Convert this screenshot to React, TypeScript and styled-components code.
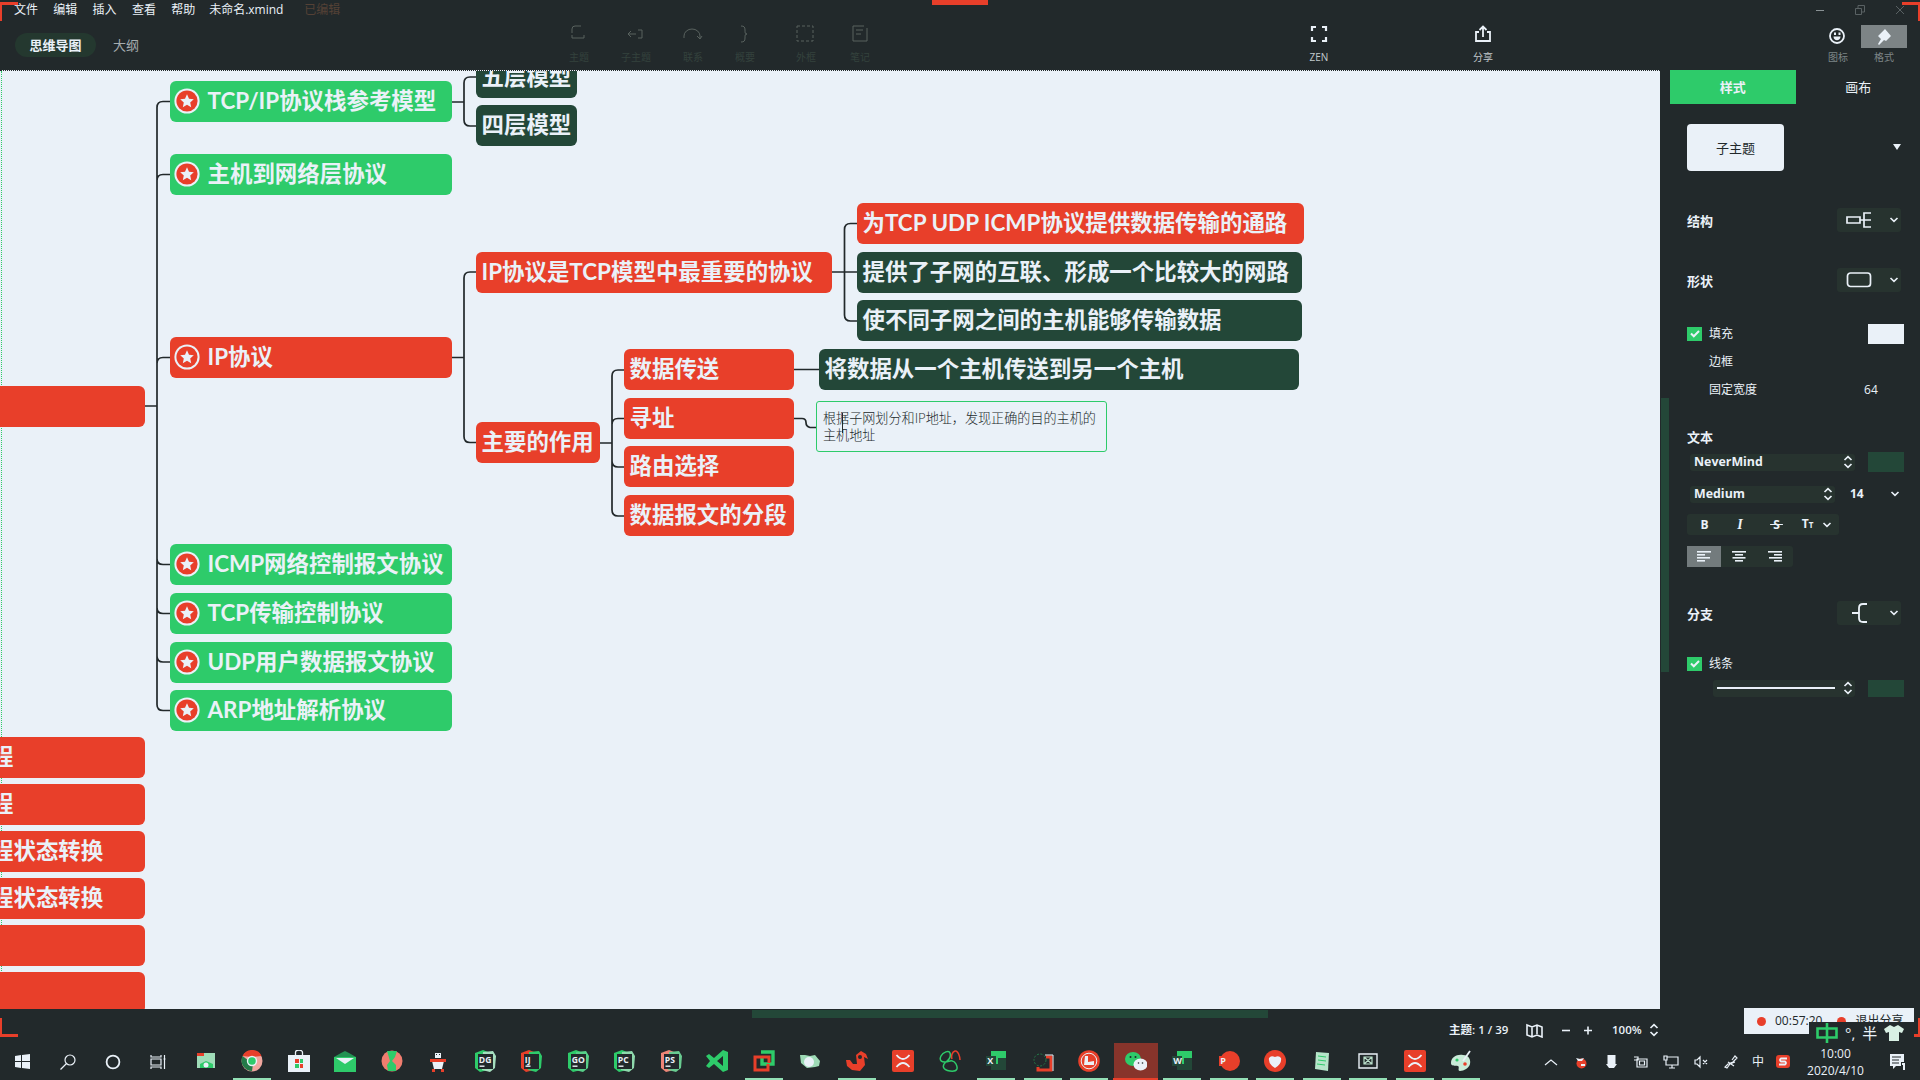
import React from "react";
import styled, { createGlobalStyle } from "styled-components";

const dark = "#22292b";
const light = "#eaf1f8";
const green = "#2ecb6a";
const red = "#e83f2a";
const forest = "#234738";
const faint = "#27332f";
const dim = "#46504f";

const GlobalStyle = createGlobalStyle`
  * { box-sizing: border-box; }
  body { margin: 0; background: ${dark}; overflow: hidden; }
  svg { display: block; flex: none; }
`;

const Screen = styled.div`
  position: relative;
  width: 1920px;
  height: 1080px;
  display: grid;
  grid-template-rows: 70px 939px 34px 37px;
  overflow: hidden;
  background: ${dark};
  color: ${light};
  font: 12px/16px "Open Sans", "Noto Sans CJK SC", sans-serif;
  white-space: nowrap;
`;

/* ---------- header ---------- */
const Header = styled.header`
  display: grid;
  grid-template-rows: 20px 50px;
`;
const MenuBar = styled.div`
  display: flex;
  align-items: center;
  padding-left: 14px;
`;
const MenuItem = styled.span<{ $w?: number }>`
  width: ${(p) => p.$w ?? 39.3}px;
  font-size: 12px;
`;
const Edited = styled.span`
  color: #554136;
`;
const WindowButtons = styled.div`
  display: flex;
  gap: 28px;
  margin-left: auto;
  padding-right: 14px;
  color: #899194;
`;
const Toolbar = styled.div`
  display: flex;
  align-items: flex-start;
`;
const ViewTab = styled.button<{ $active?: boolean }>`
  margin: 13px 0 0 ${(p) => (p.$active ? 15 : 0)}px;
  width: ${(p) => (p.$active ? 81 : 60)}px;
  height: 24px;
  padding: 0;
  border: 0;
  border-radius: 12px;
  background: ${(p) => (p.$active ? "#24382f" : "transparent")};
  color: ${(p) => (p.$active ? light : "#a5acaf")};
  font: ${(p) => (p.$active ? 700 : 400)} 13px/22px "Noto Sans CJK SC", sans-serif;
`;
const Tool = styled.button<{ $w: number; $left?: number; $dim?: boolean; $soft?: boolean }>`
  display: flex;
  flex-direction: column;
  align-items: center;
  justify-content: space-between;
  width: ${(p) => p.$w}px;
  height: 46px;
  margin-left: ${(p) => p.$left ?? 0}px;
  padding: 5px 0 2px;
  border: 0;
  background: none;
  color: ${(p) => (p.$dim ? "#59625f" : light)};
  font: 10px/14px "Open Sans", "Noto Sans CJK SC", sans-serif;
  span { color: ${(p) => (p.$dim ? "#34423d" : p.$soft ? "#7d8587" : "#c3cacd")}; }
`;
const PinBox = styled.div`
  display: grid;
  place-items: center;
  width: 46px;
  height: 23px;
  background: #7d8486;
`;

/* ---------- canvas ---------- */
const Body = styled.div`
  display: grid;
  grid-template-columns: 1660px 10px 250px;
`;
const Canvas = styled.main`
  position: relative;
  overflow: hidden;
  background: ${light};
  border-top: 1px dotted ${dark};
`;
const CanvasEdge = styled.div`
  position: absolute;
  left: 1px;
  top: 0;
  bottom: 0;
  border-left: 1px dotted ${green};
`;
const Links = styled.svg`
  position: absolute;
  left: 0;
  top: -71px;
`;
const Topic = styled.div<{ $x: number; $y: number; $w: number; $c: string; $pad: number }>`
  position: absolute;
  left: ${(p) => p.$x}px;
  top: ${(p) => p.$y - 71}px;
  width: ${(p) => p.$w}px;
  height: 41px;
  display: flex;
  align-items: center;
  gap: 8px;
  padding: 0 0 1px ${(p) => p.$pad}px;
  border-radius: 6px;
  background: ${(p) => p.$c};
  color: ${light};
  font: 700 22.45px/30px Lato, "Noto Sans CJK SC", sans-serif;
`;
const Leaf = styled.div`
  position: absolute;
  left: 816px;
  top: 330px;
  width: 291px;
  height: 51px;
  padding: 8px 6px;
  border: 1px solid ${green};
  border-radius: 3px;
  color: ${dark};
  font: 300 13.1px/17px Lato, "Noto Sans CJK SC", sans-serif;
`;
const TextCursor = styled.i`
  position: absolute;
  left: 842px;
  top: 342px;
  width: 1px;
  height: 20px;
  background: ${dark};
`;

/* ---------- format panel ---------- */
const Gutter = styled.div`
  padding: 328px 0 0 1px;
`;
const VThumb = styled.div`
  width: 8px;
  height: 274px;
  background: ${forest};
`;
const Tabs = styled.div`
  display: flex;
`;
const Tab = styled.button<{ $active?: boolean }>`
  width: ${(p) => (p.$active ? 126 : 125)}px;
  height: 34px;
  padding: 0 0 0 ${(p) => (p.$active ? 0 : 1)}px;
  border: 0;
  background: ${(p) => (p.$active ? green : "transparent")};
  color: ${light};
  font: ${(p) => (p.$active ? 700 : 400)} 13px/20px "Noto Sans CJK SC", sans-serif;
`;
const Fields = styled.div`
  padding: 0 16px 0 17px;
`;
const Row = styled.div<{ $mt: number; $h: number; $indent?: number }>`
  display: flex;
  align-items: center;
  height: ${(p) => p.$h}px;
  margin-top: ${(p) => p.$mt}px;
  padding-left: ${(p) => p.$indent ?? 0}px;
`;
const Push = styled.div`
  margin-left: auto;
`;
const ThemeCard = styled.div`
  display: grid;
  place-items: center;
  width: 97px;
  height: 47px;
  border-radius: 4px;
  background: ${light};
  color: ${dark};
  font-size: 13px;
`;
const Heading = styled.h3`
  margin: 0;
  font: 700 13px/19px "Noto Sans CJK SC", sans-serif;
`;
const Label = styled.span`
  font-size: 12px;
  margin-left: 7px;
`;
const Picker = styled.div`
  display: flex;
  align-items: center;
  justify-content: space-between;
  width: 64px;
  height: 24px;
  margin: 0 3px 0 auto;
  padding: 0 2px 0 9px;
  border-radius: 3px;
  background: ${faint};
`;
const Select = styled.div<{ $w: number; $h?: number }>`
  display: flex;
  align-items: center;
  justify-content: space-between;
  width: ${(p) => p.$w}px;
  height: ${(p) => p.$h ?? 17}px;
  padding: 0 2px 0 4px;
  border-radius: 3px;
  background: ${faint};
  font: 700 12.4px/16px "Open Sans", sans-serif;
`;
const Swatch = styled.div<{ $c: string; $h?: number }>`
  width: 36px;
  height: ${(p) => p.$h ?? 20}px;
  margin-left: auto;
  background: ${(p) => p.$c};
`;
const Check = styled.div`
  display: grid;
  place-items: center;
  width: 15px;
  height: 14px;
  background: ${green};
`;
const Size = styled.span`
  margin-left: 15px;
  font: 700 12px/16px "Open Sans", sans-serif;
`;
const Segments = styled.div<{ $w: number }>`
  display: flex;
  width: ${(p) => p.$w}px;
  height: 100%;
  background: ${faint};
  border-radius: 3px;
`;
const Segment = styled.div<{ $w: number; $on?: boolean }>`
  display: flex;
  align-items: center;
  justify-content: center;
  gap: 9px;
  width: ${(p) => p.$w}px;
  background: ${(p) => (p.$on ? "#737b7d" : "transparent")};
  font: 700 12px/16px "Open Sans", sans-serif;
  em { font-family: "Liberation Serif", serif; font-size: 14px; }
  small { font-size: 8px; }
`;
const Stroke = styled.i`
  width: 118px;
  height: 2px;
  background: ${light};
`;

/* ---------- status bar ---------- */
const Status = styled.footer`
  display: grid;
  grid-template-rows: 9px 24px;
`;
const HThumb = styled.div`
  width: 516px;
  height: 8px;
  margin: 1px 0 0 752px;
  background: ${forest};
`;
const StatusRow = styled.div`
  display: flex;
  align-items: center;
  padding-left: 1449px;
  font-weight: 600;
  font-size: 11.5px;
`;
const Counter = styled.span`
  width: 77px;
`;
const Zoom = styled.span`
  width: 37px;
  margin-left: 19px;
`;
const Gap = styled.i<{ $w: number }>`
  width: ${(p) => p.$w}px;
`;

/* ---------- taskbar ---------- */
const TaskBar = styled.nav`
  display: flex;
  height: 37px;
`;
const SysCell = styled.div`
  display: grid;
  place-items: center;
  width: 45px;
`;
const Apps = styled.div`
  display: flex;
  margin-left: 2.25px;
`;
const AppCell = styled.div<{ $open?: boolean; $active?: boolean }>`
  display: flex;
  justify-content: center;
  align-items: flex-start;
  width: 46.5px;
  height: 37px;
  padding-top: 7px;
  background: linear-gradient(
      ${(p) => (p.$active ? red : p.$open ? "#93dfb5" : "transparent")},
      ${(p) => (p.$active ? red : p.$open ? "#93dfb5" : "transparent")}
    )
    center bottom / ${(p) => (p.$active ? 45 : 38)}px 2px no-repeat,
    linear-gradient(${(p) => (p.$active ? "#87342b, #87342b" : "transparent, transparent")}) center / 44px 100% no-repeat;
`;
const Tray = styled.div`
  display: flex;
  align-items: center;
  margin-left: auto;
`;
const TrayCell = styled.div<{ $w?: number }>`
  display: grid;
  place-items: center;
  width: ${(p) => p.$w ?? 30}px;
`;
const Clock = styled.div`
  width: 79px;
  text-align: center;
  font-size: 12px;
  line-height: 17px;
`;

/* ---------- overlays ---------- */
const Corner = styled.i<{ $v: "top" | "bottom"; $h: "left" | "right" }>`
  position: absolute;
  ${(p) => p.$h}: 0;
  ${(p) => (p.$v === "top" ? "top: 2px" : "top: 1018px")};
  width: 18px;
  height: 19px;
  border: 0 solid ${red};
  border-${(p) => p.$v}-width: 3px;
  border-${(p) => p.$h}-width: 2px;
`;
const TopMark = styled.i`
  position: absolute;
  left: 932px;
  top: 0;
  width: 56px;
  height: 5px;
  background: ${red};
`;
const Recorder = styled.div`
  position: absolute;
  left: 1744px;
  top: 1008px;
  width: 170px;
  height: 26px;
  display: flex;
  align-items: center;
  padding-left: 13px;
  background: ${light};
  color: ${dark};
  font-size: 12px;
`;
const RecDot = styled.i<{ $ml?: number }>`
  width: 9px;
  height: 9px;
  margin: 0 9px 0 ${(p) => p.$ml ?? 0}px;
  border-radius: 50%;
  background: ${red};
`;
const Quit = styled.span`
  font-size: 12px;
`;
const Ime = styled.div`
  position: absolute;
  left: 1809px;
  top: 1022px;
  width: 105px;
  height: 21px;
  display: flex;
  align-items: center;
  gap: 7px;
  padding-left: 7px;
  background: ${dark};
  font-size: 15px;
`;

/* ---------- small icons ---------- */
const Chevron = () => (
  <svg width="10" height="6" viewBox="0 0 10 6" fill="none" stroke={light} strokeWidth="1.6"><path d="M1.5 1 5 4.4 8.5 1" /></svg>
);
const UpDown = () => (
  <svg width="10" height="14" viewBox="0 0 10 14" fill="none" stroke={light} strokeWidth="1.7"><path d="M1.5 5 5 1.6 8.5 5M1.5 9 5 12.4 8.5 9" /></svg>
);
const Tick = () => (
  <svg width="10" height="8" viewBox="0 0 10 8" fill="none" stroke={light} strokeWidth="2"><path d="m1 3.5 2.8 2.8L9 1" /></svg>
);
const Star = ({ rim }: { rim: string }) => (
  <svg width="26" height="26" viewBox="-13 -13 26 26">
    <circle r="12.6" fill={light} />
    <circle r="10.6" fill={rim} />
    <path fill={light} d="M0-6.8 2-2.3 6.8-1.8 3.2 1.5 4.2 6.2 0 3.8-4.2 6.2-3.2 1.5-6.8-1.8-2-2.3Z" />
  </svg>
);
const Align = ({ kind }: { kind: "l" | "c" | "r" }) => {
  const at = (w: number) => (kind === "l" ? 0 : kind === "c" ? (14 - w) / 2 : 14 - w);
  return (
    <svg width="14" height="12" viewBox="0 0 14 12" fill={light}>
      {[14, 8, 13, 8].map((w, i) => <rect key={i} x={at(w)} y={i * 3} width={w} height="1.6" />)}
    </svg>
  );
};

const tools: [string, number, number, React.ReactNode][] = [
  ["主题", 50, 398, <path key="a" d="M3 8V4a3 3 0 0 1 3-3h6M3 10v3h12v-3" />],
  ["子主题", 50, 7, <path key="a" d="m5 6-3 3 3 3M2 9h8M12 5h4v8h-4" />],
  ["联系", 50, 7, <path key="a" d="M1 13v-2a8 7 0 0 1 16 0v2M14 11l3 3 2-3" />],
  ["概要", 50, 2, <path key="a" d="M6 1c3 0 4 1 4 4s0 4 2 4c-2 0-2 1-2 4s-1 4-4 4" />],
  ["外框", 50, 11, <path key="a" strokeDasharray="3 2" d="M1 1h16v15H1z" />],
  ["笔记", 50, 4, <path key="a" d="M17 3v13H3V1h11M6 5h7M6 9h5" />],
];

type T = [number, number, number, string, string, boolean?];
const topics: T[] = [
  [170, 81, 282, green, "TCP/IP协议栈参考模型", true],
  [170, 154, 282, green, "主机到网络层协议", true],
  [170, 337, 282, red, "IP协议", true],
  [170, 544, 282, green, "ICMP网络控制报文协议", true],
  [170, 593, 282, green, "TCP传输控制协议", true],
  [170, 642, 282, green, "UDP用户数据报文协议", true],
  [170, 690, 282, green, "ARP地址解析协议", true],
  [476, 57, 101, forest, "五层模型"],
  [476, 105, 101, forest, "四层模型"],
  [476, 252, 356, red, "IP协议是TCP模型中最重要的协议"],
  [476, 422, 124, red, "主要的作用"],
  [857, 203, 447, red, "为TCP UDP ICMP协议提供数据传输的通路"],
  [857, 252, 445, forest, "提供了子网的互联、形成一个比较大的网路"],
  [857, 300, 445, forest, "使不同子网之间的主机能够传输数据"],
  [624, 349, 170, red, "数据传送"],
  [624, 398, 170, red, "寻址"],
  [624, 446, 170, red, "路由选择"],
  [624, 495, 170, red, "数据报文的分段"],
  [819, 349, 480, forest, "将数据从一个主机传送到另一个主机"],
];
const leftTopics: [number, string][] = [
  [386, ""], [737, "程"], [784, "程"], [831, "程状态转换"], [878, "程状态转换"], [925, ""], [972, ""],
];

const fork = (x: number, from: number, to: number, y: number, ys: number[]) =>
  `M${from} ${y}H${x}` +
  ys.map((t) => (Math.abs(t - y) < 3 ? `M${x} ${t}H${to}` : `M${x} ${y}V${t > y ? t - 6 : t + 6}Q${x} ${t} ${x + 6} ${t}H${to}`)).join("");

/* ---------- taskbar icons ---------- */
const JetBrains = ({ t, a, b }: { t: string; a: string; b: string }) => (
  <>
    <path fill={a} d="M1 3 9 0l5 2v18L6 22 1 18Z" />
    <path fill={b} d="m9 2 10-1 3 5-1 12-5 4-8-2Z" />
    <rect x="4" y="4" width="15" height="15" fill={dark} />
    <text x="4.8" y="12.6" fontSize="8.6" fontWeight="700" fontFamily="Open Sans, sans-serif" fill={light}>{t}</text>
    <path fill={light} d="M5.500 15.500h5v1.400h-5z" />
  </>
);
const Office = ({ t, c, round }: { t: string; c: string; round?: boolean }) => (
  <>
    {round ? <circle cx="12" cy="11" r="10" fill={c} /> : <path fill={c} d="M6 1h15v19H6z" />}
    {!round && <path fill={forest} d="M13 8h8v12H6v-6h7z" />}
    <rect x="1" y="6" width="10" height="10" fill={c === red ? red : "#234738"} />
    <text x="2.300" y="14.200" fontSize="9" fontWeight="700" fontFamily="Open Sans, sans-serif" fill={light}>{t}</text>
  </>
);
const XIcon = () => (
  <>
    <rect width="22" height="22" rx="2" fill={red} />
    <path d="M4.500 5c2.500 3 4 4 6.500 4s4-1 6.500-4M4.500 17c2.500-3 4-4 6.500-4s4 1 6.500 4" fill="none" stroke={light} strokeWidth="1.8" />
  </>
);

const apps: { icon: React.ReactNode; open?: boolean; active?: boolean }[] = [
  { icon: <><path fill="#9fdcb8" d="M2 3h18v15H2z" /><path fill={red} d="M2 3h7v3H2z" /><path fill={green} d="M5 18v-4l6-3 7 3v4z" /><circle cx="11" cy="15" r="2.500" fill={light} /></> },
  { icon: <><circle cx="11" cy="11" r="10.500" fill="#f0a79f" /><path fill={red} d="M1.500 6A10.500 10.500 0 0 1 20.500 6L11 7z" /><path fill="#237a48" d="M1.500 6A10.500 10.500 0 0 0 11 21l1-7z" /><circle cx="11" cy="11" r="5.200" fill={light} /><circle cx="11" cy="11" r="3.800" fill={green} /></>, open: true },
  { icon: <><path d="M7.500 5V2.500a3.500 2.500 0 0 1 7 0V5" fill="none" stroke={light} strokeWidth="1.300" /><path fill={light} d="M0 5h22v17H0z" /><path fill={red} d="M7 9h4v4H7zM12 14h3v4h-3z" /><path fill={green} d="M12 9h3v4h-3zM7 14h4v4H7z" /></> },
  { icon: <><path fill="#239153" d="M0 7 7 3l4-2 4 2 7 4v3H0z" /><path fill={green} d="M0 7h22v15H0z" /><path fill={light} d="m2 8h18l-9 6z" /></> },
  { icon: <><circle cx="11" cy="11" r="10.500" fill="#f07d6f" /><path fill={green} d="M6 1h10l-2 6-3 4 4 4v6l-8 0-1-6 3-4z" /></> },
  { icon: <><path fill={light} d="M8 3h6v5H8zM5 11h12l-2 8H7z" /><path fill={red} d="M3 9h16v3H3zM5 19h3v3H5zM14 19h3v3h-3z" /><path fill={dark} d="M9 4h1v1H9zM12 4h1v1h-1z" /></> },
  { icon: <JetBrains t="DG" a={green} b="#a6dfbf" /> },
  { icon: <JetBrains t="IJ" a={red} b={green} /> },
  { icon: <JetBrains t="GO" a={green} b="#57cf88" /> },
  { icon: <JetBrains t="PC" a={green} b="#8ed9ac" /> },
  { icon: <JetBrains t="PS" a="#ee8577" b="#69cb90" /> },
  { icon: <path fill={green} fillRule="evenodd" d="m17 0 5 2v18l-5 2-9-8-5 4-3-2 4-5-4-5 3-2 5 4zM17 6l-6 5 6 5z" /> },
  { icon: <><path d="M8 2h12v12H9V7" fill="none" stroke={green} strokeWidth="3.400" /><path d="M15 14v6H2V7h14v6" fill="none" stroke={red} strokeWidth="3" /></>, open: true },
  { icon: <><path fill="#9edab6" d="M1 5h5l5 1 5-1 5 6-1 5-4 1-8 1-6-5z" /><circle cx="10" cy="12" r="5" fill={light} /></> },
  { icon: <><path fill={red} d="M0 10h4l3 4 4 0-1-9 5-4 5 3 2 5-4-2 1 8-5 6-8-1-5-4z" /><circle cx="14" cy="7" r="2" fill={dark} /></>, open: true },
  { icon: <XIcon /> },
  { icon: <g fill="none" strokeWidth="1.500"><path stroke={green} d="M11 11C2 14 0 10 2 6s8-6 9-3 0 6-4 9-4 8 4 9 8-3 6-7-6-3-6-3" /><path stroke={red} d="M13 9c-1-3 0-7 3-8s5 6 5 9" /></g> },
  { icon: <Office t="X" c={green} />, open: true },
  { icon: <><path d="M14 7h5v13H6v-3" fill="none" stroke={red} strokeWidth="3" /><path stroke={light} fill="none" d="M13 5h8v16" /><circle cx="8" cy="10" r="6" fill="none" stroke="#237a48" strokeDasharray="2 1.500" /></>, open: true },
  { icon: <><circle cx="11" cy="11" r="10.800" fill={red} /><circle cx="11" cy="11" r="7.800" fill="none" stroke={light} /><path fill={light} d="M7 6h3v6l6-1v4H6z" /></>, open: true },
  { icon: <><ellipse cx="8" cy="9" rx="8" ry="7" fill={green} /><circle cx="5.500" cy="7" r="1" fill={dark} /><circle cx="10.500" cy="7" r="1" fill={dark} /><ellipse cx="15.500" cy="14.500" rx="7" ry="6" fill={light} /><circle cx="13.500" cy="13" r=".8" fill={dark} /><circle cx="17.500" cy="13" r=".8" fill={dark} /></>, active: true },
  { icon: <Office t="W" c={green} />, open: true },
  { icon: <Office t="P" c={red} round />, open: true },
  { icon: <><circle cx="11" cy="11" r="11" fill={red} /><path fill={light} d="M5 8q2-3 6-1 4-2 6 1 1 6-6 10Q4 14 5 8z" /></>, open: true },
  { icon: <><path fill="#b6e6ca" d="m5 2 13 1-1 18-13-2z" /><path d="m7 6 8 1M7 10l8 1M6 14l8 1" stroke={green} /></>, open: true },
  { icon: <><path d="M2 4h18v14H2z" fill="none" stroke={light} strokeWidth="1.400" /><path d="M7 7h8v7H7zM7 7l8 7M15 7l-8 7" stroke="#b9dfca" fill="none" strokeWidth="1.200" /></>, open: true },
  { icon: <XIcon />, open: true },
  { icon: <><path fill="#c9ebd8" d="M1 13c0-6 6-9 12-8 6 0 8 5 7 9s-6 7-10 7c-3 0 0-4-2-5s-7 1-7-3z" /><path d="m13 11 7-10" stroke={light} strokeWidth="1.800" /><circle cx="7" cy="10" r="1.600" fill={green} /><circle cx="15" cy="14" r="1.800" fill={red} /></>, open: true },
];

const trayIcons: React.ReactNode[] = [
  <path key="0" d="m2 11 6-5 6 5" />,
  <g key="1" stroke="none"><circle cx="8.500" cy="9.500" r="5" fill={red} /><path fill={light} d="m3 4 4 1 4-1-2 3H5zM8 10h4v2H8z" /></g>,
  <g key="2" stroke="none" fill={light}><rect x="4.500" y="1" width="8" height="10" /><path d="M3 10h11l-3 4H6z" /></g>,
  <path key="3" d="M4 5h10v8H4zM1 3h4v3H1M6.500 7h5v4h-5zM14 7v4" />,
  <path key="4" d="M4 3h11v8H3V6M6 14h6M9 11v3M1 2h3v4H1z" />,
  <path key="5" d="M2 6h2l3-3v10L4 10H2zM10 6l4 4M14 6l-4 4" />,
  <path key="6" d="M9 6l3-4 2 2-4 4-5 2-3 3 2 1 3-4 5-2M5 8l6 4" />,
];

export default function App() {
  return (
    <Screen>
      <GlobalStyle />
      <Header>
        <MenuBar>
          <MenuItem>文件</MenuItem><MenuItem>编辑</MenuItem><MenuItem>插入</MenuItem><MenuItem>查看</MenuItem>
          <MenuItem $w={38}>帮助</MenuItem><MenuItem $w={95}>未命名.xmind</MenuItem>
          <Edited>已编辑</Edited>
          <WindowButtons>
            <svg width="12" height="12" stroke="currentColor"><path d="M2 6.500h8" /></svg>
            <svg width="12" height="12" stroke="#596163" fill="none"><path d="M1.500 4.500h6v6h-6zM4 4V1.500h6.500V8H8" /></svg>
            <svg width="12" height="12" stroke="#596163"><path d="m2 2 8 8M10 2l-8 8" /></svg>
          </WindowButtons>
        </MenuBar>
        <Toolbar>
          <ViewTab $active>思维导图</ViewTab>
          <ViewTab>大纲</ViewTab>
          {tools.map(([name, w, left, icon]) => (
            <Tool key={name} $w={w} $left={left} $dim>
              <svg width="20" height="18" fill="none" stroke="currentColor">{icon}</svg>
              <span>{name}</span>
            </Tool>
          ))}
          <Tool $w={50} $left={409}>
            <svg width="18" height="18" fill="none" stroke={light} strokeWidth="2.200"><path d="M2 6V2h4M12 2h4v4M16 12v4h-4M6 16H2v-4" /></svg>
            <span>ZEN</span>
          </Tool>
          <Tool $w={50} $left={114}>
            <svg width="18" height="18" fill="none" stroke={light} strokeWidth="1.800"><path d="M5 7H2v9h14V7h-3M9 12V2M5.500 5 9 1.500 12.500 5" /></svg>
            <span>分享</span>
          </Tool>
          <Tool $w={50} $left={305} $soft>
            <svg width="18" height="20" fill="none" stroke={light} strokeWidth="1.800"><circle cx="8" cy="11" r="7" /><path fill={light} stroke="none" d="M5 7.500h2v2.500H5zM9.500 7.500h2v2.500h-2zM4.500 11.500h7c0 5-7 5-7 0z" /></svg>
            <span>图标</span>
          </Tool>
          <Tool $w={46} $left={-2} $soft>
            <PinBox>
              <svg width="16" height="18" fill={light}><path d="m9 1 6 7-5 5-2-1-5 5-1-1 3-5-3-3z" /></svg>
            </PinBox>
            <span>格式</span>
          </Tool>
        </Toolbar>
      </Header>

      <Body>
        <Canvas>
          <CanvasEdge />
          <Links width="1660" height="1009" fill="none" stroke={dark} strokeWidth="1.700">
            <path d={fork(157, 145, 170, 406, [101.500, 174.500, 357.500, 564.500, 613.500, 662, 710.500])} />
            <path d={fork(464, 452, 476, 102, [77, 126])} />
            <path d={fork(464, 452, 476, 357.500, [272, 442.500])} />
            <path d={fork(844.500, 832, 857, 272, [223.500, 272, 321])} />
            <path d={fork(612, 600, 624, 443, [370, 418.500, 467, 516])} />
            <path d="M794 369.500h25M794 418.500h8q4 0 4 4t4 5h6" />
          </Links>
          {leftTopics.map(([y, text]) => (
            <Topic key={y} $x={-20} $y={y} $w={165} $c={red} $pad={11}>{text}</Topic>
          ))}
          {topics.map(([x, y, w, c, text, star]) => (
            <Topic key={text} $x={x} $y={y} $w={w} $c={c} $pad={star ? 3.500 : 5.500}>
              {star && <Star rim={red} />}
              <span>{text}</span>
            </Topic>
          ))}
          <Leaf>根据子网划分和IP地址，发现正确的目的主机的<br />主机地址</Leaf>
          <TextCursor />
        </Canvas>
        <Gutter><VThumb /></Gutter>
        <aside>
          <Tabs><Tab $active>样式</Tab><Tab>画布</Tab></Tabs>
          <Fields>
            <Row $mt={20} $h={47}>
              <ThemeCard>子主题</ThemeCard>
              <Push><svg width="11" height="7" fill={light}><path d="M0 0h8L4 6z" /></svg></Push>
            </Row>
            <Row $mt={37} $h={24}>
              <Heading>结构</Heading>
              <Picker>
                <svg width="26" height="18" fill="none" stroke={light} strokeWidth="1.700"><path d="M1 6h13v6H1zM14 9h11M25 2h-7v14h7" /></svg>
                <Chevron />
              </Picker>
            </Row>
            <Row $mt={36} $h={24}>
              <Heading>形状</Heading>
              <Picker>
                <svg width="26" height="16" fill="none" stroke={light} strokeWidth="1.700"><rect x="1.500" y="1" width="23" height="13.500" rx="3" /></svg>
                <Chevron />
              </Picker>
            </Row>
            <Row $mt={31} $h={21}><Check><Tick /></Check><Label>填充</Label><Swatch $c={light} /></Row>
            <Row $mt={8} $h={19} $indent={15}><Label>边框</Label></Row>
            <Row $mt={9} $h={19} $indent={15}><Label>固定宽度</Label><Gap $w={107} /><span>64</span></Row>
            <Row $mt={28} $h={19}><Heading>文本</Heading></Row>
            <Row $mt={6} $h={20} $indent={3}><Select $w={165}>NeverMind<UpDown /></Select><Swatch $c={forest} /></Row>
            <Row $mt={12} $h={20} $indent={3}>
              <Select $w={145}>Medium<UpDown /></Select><Size>14</Size>
              <Push><svg width="14" height="6" fill="none" stroke={light} strokeWidth="1.600"><path d="M1.500 1 5 4.400 8.500 1" /></svg></Push>
            </Row>
            <Row $mt={10} $h={21}>
              <Segments $w={152}>
                <Segment $w={35}>B</Segment>
                <Segment $w={36}><em>I</em></Segment>
                <Segment $w={37}><s>&nbsp;S&nbsp;</s></Segment>
                <Segment $w={44}><span>T<small>T</small></span><Chevron /></Segment>
              </Segments>
            </Row>
            <Row $mt={11} $h={21}>
              <Segments $w={106}>
                <Segment $w={35} $on><Align kind="l" /></Segment>
                <Segment $w={36}><Align kind="c" /></Segment>
                <Segment $w={38}><Align kind="r" /></Segment>
              </Segments>
            </Row>
            <Row $mt={34} $h={24}>
              <Heading>分支</Heading>
              <Picker>
                <svg width="26" height="20" fill="none" stroke={light} strokeWidth="1.800"><path d="M6 10h7M21 1h-4q-4 0-4 4v10q0 4 4 4h4" /></svg>
                <Chevron />
              </Picker>
            </Row>
            <Row $mt={29} $h={19}><Check><Tick /></Check><Label>线条</Label></Row>
            <Row $mt={6} $h={18} $indent={26}><Select $w={142}><Stroke /><UpDown /></Select><Swatch $c={forest} $h={17} /></Row>
          </Fields>
        </aside>
      </Body>

      <Status>
        <HThumb />
        <StatusRow>
          <Counter>主题: 1 / 39</Counter>
          <svg width="17" height="15" fill="none" stroke={light} strokeWidth="1.600"><path d="m1 2 5 2 5-2 5 2v10l-5-2-5 2-5-2zM6 4v9M11 2v9" /></svg>
          <Gap $w={19} />
          <svg width="9" height="9" stroke={light} strokeWidth="1.600"><path d="M0 4.500h8" /></svg>
          <Gap $w={13} />
          <svg width="9" height="9" stroke={light} strokeWidth="1.600"><path d="M0 4.500h8M4 .5v8" /></svg>
          <Zoom>100%</Zoom>
          <UpDown />
        </StatusRow>
      </Status>

      <TaskBar>
        <SysCell><svg width="15" height="15" fill={light}><path d="M0 2 6 1v6H0zM7 1l8-1v7H7zM0 8h6v6l-6-1zM7 8h8v7l-8-1z" /></svg></SysCell>
        <SysCell><svg width="16" height="16" fill="none" stroke={light} strokeWidth="1.200"><circle cx="10" cy="6" r="5" /><path d="m6.500 9.500-6 6" /></svg></SysCell>
        <SysCell><svg width="16" height="16" fill="none" stroke={light} strokeWidth="1.800"><circle cx="8" cy="8" r="6.400" /></svg></SysCell>
        <SysCell><svg width="16" height="16" fill="none" stroke={light} strokeWidth="1.200"><path d="M1 1v2h10V1M1 5h10v6H1zM1 15v-2h10v2M14.500 1v14M13.500 5h2" /></svg></SysCell>
        <Apps>
          {apps.map((a, i) => (
            <AppCell key={i} $open={a.open} $active={a.active}>
              <svg width="22" height="22" viewBox="0 0 22 22">{a.icon}</svg>
            </AppCell>
          ))}
        </Apps>
        <Tray>
          {trayIcons.map((icon, i) => (
            <TrayCell key={i}><svg width="16" height="16" fill="none" stroke={light} strokeWidth="1.200">{icon}</svg></TrayCell>
          ))}
          <TrayCell $w={24}>中</TrayCell>
          <TrayCell $w={26}>
            <svg width="15" height="15"><rect y="1" width="14" height="13" rx="3" fill={red} /><path d="M11 4.500H5q-2 1.500 0 3h4q2 1.500 0 3H3" fill="none" stroke={light} strokeWidth="1.800" /></svg>
          </TrayCell>
          <Clock>10:00<br />2020/4/10</Clock>
          <TrayCell $w={45}>
            <svg width="17" height="17"><path fill={light} d="M1 1h14v8h-3v4H7l-3 3v-3H1z" /><path d="M3 4h9M3 7h7M3 10h7" stroke={dark} /><path fill={light} d="M13 10h3v7h-2v-5h-1z" /></svg>
          </TrayCell>
        </Tray>
      </TaskBar>

      <TopMark />
      <Corner $v="top" $h="left" />
      <Corner $v="top" $h="right" />
      <Corner $v="bottom" $h="left" />
      <Corner $v="bottom" $h="right" />
      <Recorder>
        <RecDot /><span>00:57:20</span>
        <RecDot $ml={15} /><Quit>退出分享</Quit>
      </Recorder>
      <Ime>
        <svg width="22" height="20" fill="none" stroke={green} strokeWidth="2.600"><path d="M1.500 5.500h19v9h-19zM11 0v20" /></svg>
        <span>°,</span>
        <span>半</span>
        <svg width="20" height="16" fill="#d9f0e4"><path d="m6 0 4 2 4-2 6 4-2 4-3-1v9H5V7L2 8 0 4z" /></svg>
      </Ime>
    </Screen>
  );
}
